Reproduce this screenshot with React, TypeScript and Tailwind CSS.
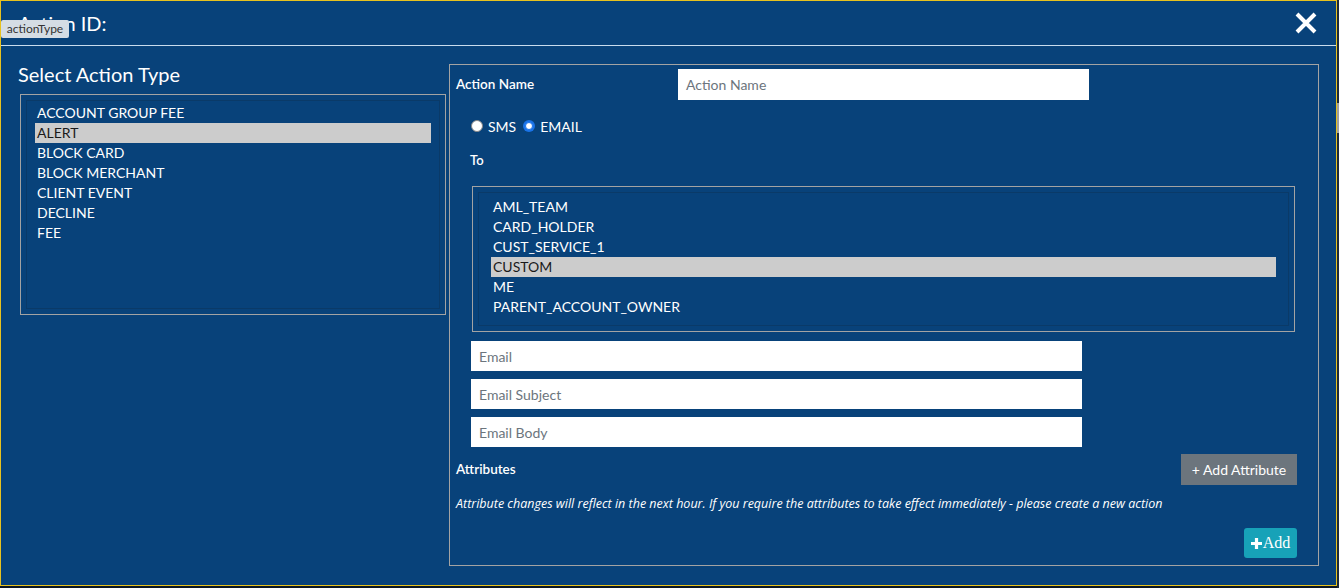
import React from "react";

const actionTypes = [
  "ACCOUNT GROUP FEE",
  "ALERT",
  "BLOCK CARD",
  "BLOCK MERCHANT",
  "CLIENT EVENT",
  "DECLINE",
  "FEE",
];

const recipients = [
  "AML_TEAM",
  "CARD_HOLDER",
  "CUST_SERVICE_1",
  "CUSTOM",
  "ME",
  "PARENT_ACCOUNT_OWNER",
];

const font = { fontFamily: "Lato, 'Open Sans', sans-serif" };

function ListBox({
  items,
  selected,
  className,
  innerClass,
}: {
  items: string[];
  selected: string;
  className: string;
  innerClass: string;
}) {
  return (
    <div className={"border border-[#a3a3a3] p-[5px] " + className}>
      <div className={"h-full border border-[#0a3a68] " + innerClass}>
        {items.map((it) => (
          <div
            key={it}
            className={
              "h-[20px] px-[2px] text-[14px] leading-[20px] " +
              (it === selected ? "bg-[#cccccc] text-[#1a1a1a]" : "text-white")
            }
          >
            {it}
          </div>
        ))}
      </div>
    </div>
  );
}

export default function App() {
  return (
    <div className="flex h-[588px] w-[1339px] overflow-hidden bg-[#0b1624]" style={font}>
      <div className="relative h-[586px] w-[1337px] border border-[#e8c21e] bg-[#08427a] text-white">
        {/* header */}
        <div className="flex h-[45px] items-center justify-between border-b border-[#c9dcee] pl-[17px] pr-[19px]">
          <div className="text-[20px] leading-none">Action ID:</div>
          <svg width="22" height="22" viewBox="0 0 22 22">
            <path d="M2 2 L20 20 M20 2 L2 20" stroke="white" strokeWidth="4" />
          </svg>
        </div>
        <div className="absolute left-0 top-[19px] flex h-[18px] w-[68px] items-center justify-center rounded-[2px] bg-[#d5dde4] text-[12px] text-[#333]">
          actionType
        </div>

        {/* body */}
        <div className="flex pl-[17px] pt-[18px]">
          <div className="w-[431px]">
            <div className="h-[20px] text-[20px] leading-[20px]">Select Action Type</div>
            <ListBox
              items={actionTypes}
              selected="ALERT"
              className="ml-[2px] mt-[10px] h-[221px] w-[426px]"
              innerClass="px-[8px] pt-[2px]"
            />
          </div>

          <div className="h-[502px] w-[870px] border border-[#a3a3a3] pl-[6px] pr-[21px]">
            <div className="mt-[4px] flex h-[31px] items-center">
              <div className="w-[222px] text-[13.5px] font-semibold">Action Name</div>
              <div className="flex h-[31px] w-[411px] items-center bg-white px-[8px] text-[14px] text-[#6c757d]">
                Action Name
              </div>
            </div>

            <div className="mt-[16px] flex h-[20px] items-center pl-[15px] text-[14px]">
              <span className="h-[12px] w-[12px] rounded-full border border-[#888] bg-white" />
              <span className="ml-[5px]">SMS</span>
              <span className="ml-[7px] flex h-[12px] w-[12px] items-center justify-center rounded-full bg-[#1a73e8]">
                <span className="h-[8px] w-[8px] rounded-full border border-[#1a73e8] bg-white" />
              </span>
              <span className="ml-[5px]">EMAIL</span>
            </div>

            <div className="mt-[14px] pl-[14px] text-[13px] font-semibold leading-[20px]">To</div>

            <ListBox
              items={recipients}
              selected="CUSTOM"
              className="ml-[16px] mt-[16px] h-[146px] w-[823px]"
              innerClass="px-[12px] pt-[4px]"
            />

            <div className="ml-[15px] mt-[9px] flex w-[611px] flex-col gap-[8px]">
              {["Email", "Email Subject", "Email Body"].map((p) => (
                <div
                  key={p}
                  className="flex h-[30px] items-center bg-white px-[8px] text-[14px] text-[#6c757d]"
                >
                  {p}
                </div>
              ))}
            </div>

            <div className="mt-[7px] flex items-center justify-between">
              <div className="text-[13.5px] font-semibold">Attributes</div>
              <div className="flex h-[31px] w-[116px] items-center justify-center bg-[#6c757d] text-[14px]">
                + Add Attribute
              </div>
            </div>

            <div
              className="mt-[11px] text-[12.5px] italic leading-[16px]"
              style={{ fontFamily: "'Open Sans', sans-serif" }}
            >
              Attribute changes will reflect in the next hour. If you require the attributes to take effect immediately - please create a new action
            </div>

            <div className="mt-[16px] flex justify-end">
              <div className="flex h-[30px] w-[53px] items-center justify-center gap-[1px] rounded-[3px] bg-[#17a2b8]">
                <svg width="11" height="11" viewBox="0 0 11 11">
                  <path d="M5.5 0 V11 M0 5.5 H11" stroke="white" strokeWidth="3.2" />
                </svg>
                <span className="text-[16px]" style={{ fontFamily: "'Liberation Serif', serif" }}>
                  Add
                </span>
              </div>
            </div>
          </div>
        </div>
      </div>
      <div className="relative w-[2px] bg-[#1c2a3a]">
        <div className="absolute top-[103px] h-[30px] w-[2px] bg-[#a0a0a0]" />
      </div>
    </div>
  );
}
